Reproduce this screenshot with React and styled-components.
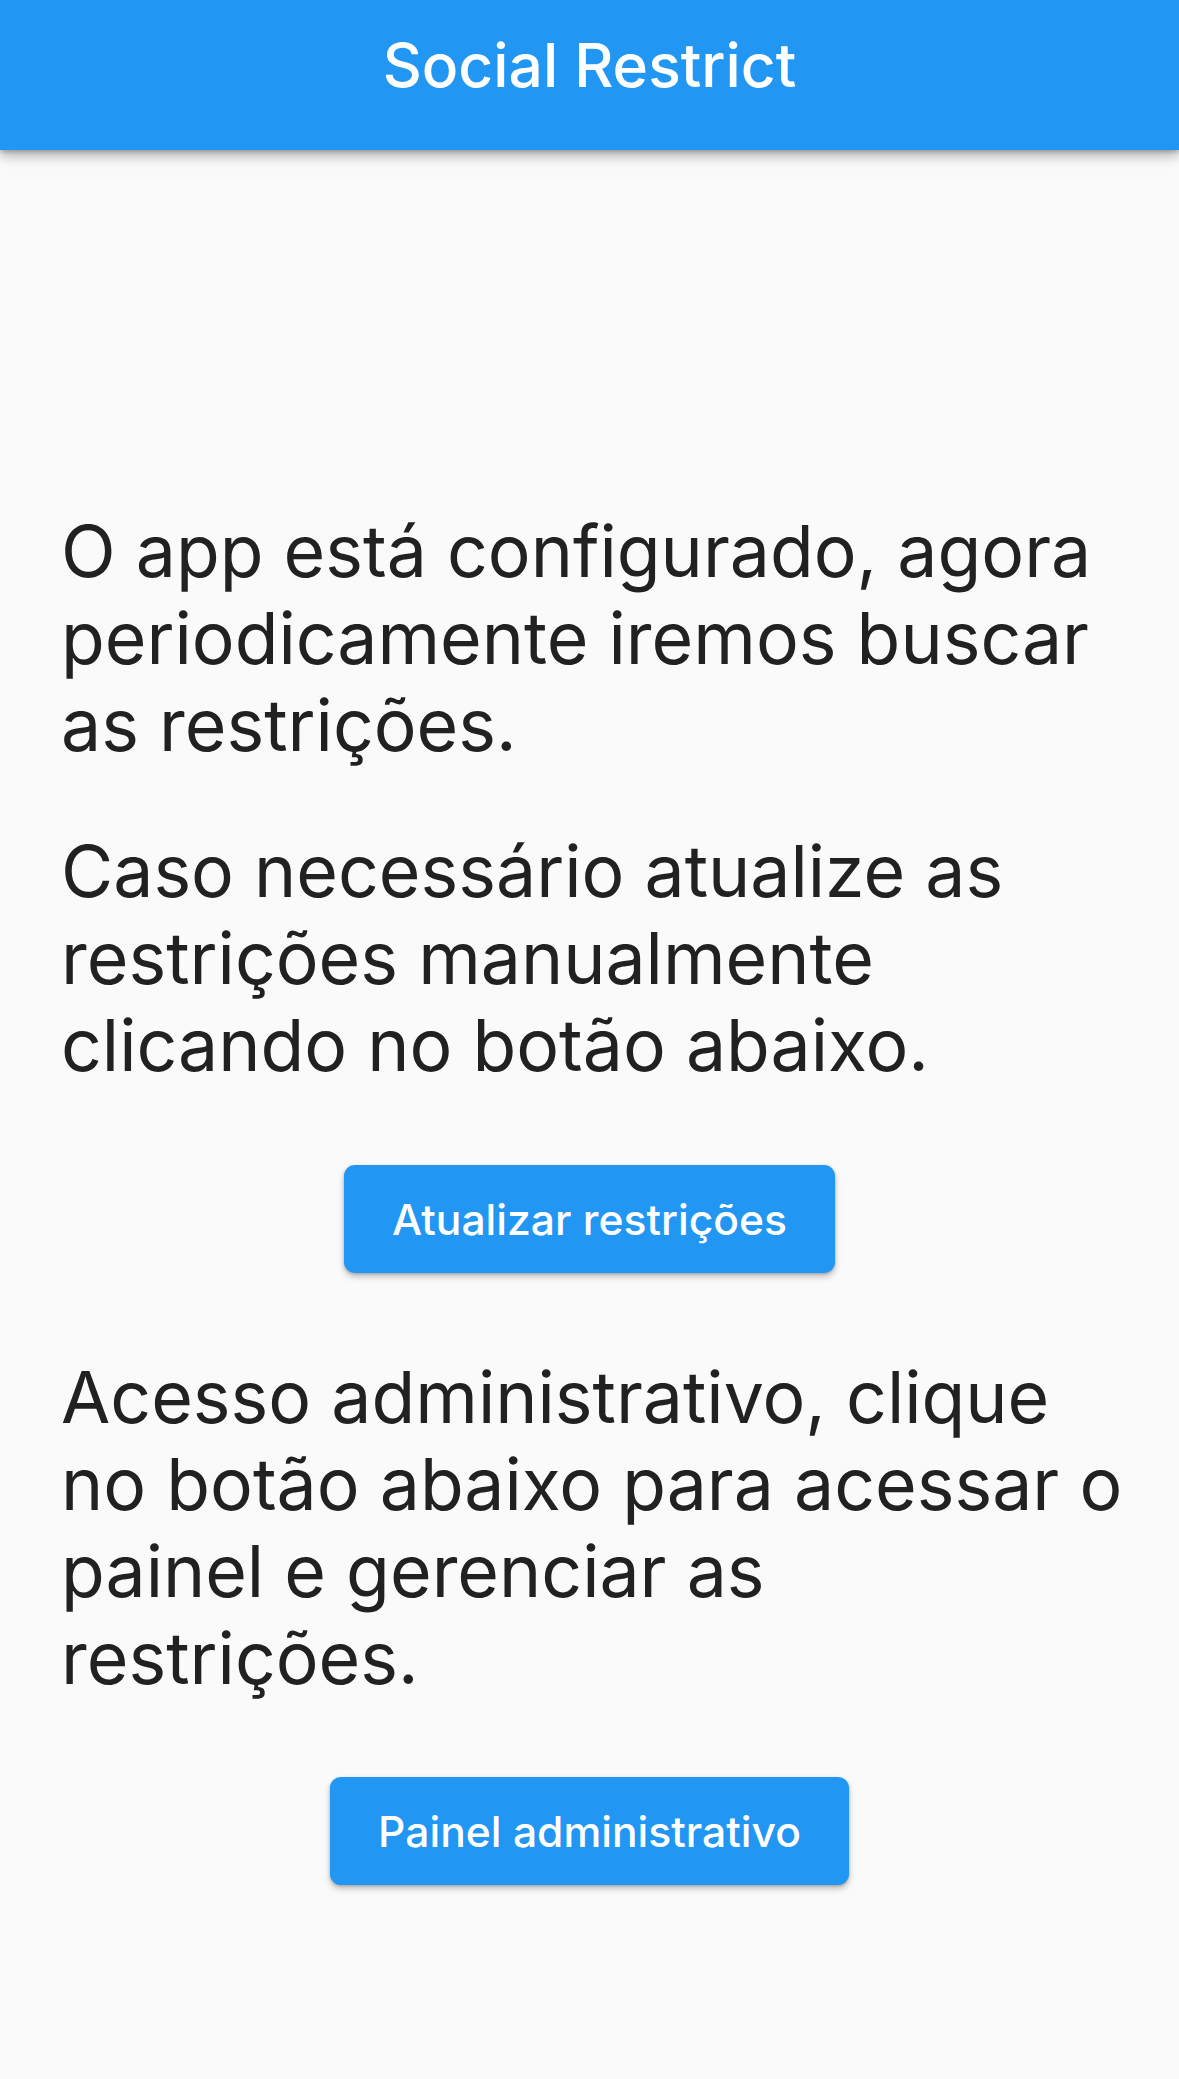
import React from "react";
import styled, { createGlobalStyle } from "styled-components";

const Global = createGlobalStyle`
  html, body { margin: 0; padding: 0; background: #fafafa; }
  body { font-family: Inter, Roboto, sans-serif; }
`;

const Screen = styled.div`
  width: 1179px;
  min-height: 2079px;
  background: #fafafa;
  display: flex;
  flex-direction: column;
`;

const AppBar = styled.header`
  height: 150px;
  background: #2196f3;
  display: flex;
  align-items: center;
  justify-content: center;
  box-shadow: 0 6px 12px rgba(0, 0, 0, 0.28), 0 2px 4px rgba(0, 0, 0, 0.2);
  position: relative;
  z-index: 1;
`;

const Title = styled.h1`
  margin: 0;
  color: #fff;
  font-family: Inter, Roboto, sans-serif;
  font-weight: 500;
  font-size: 60.5px;
  padding-bottom: 20px;
`;

const Body = styled.main`
  display: flex;
  flex-direction: column;
  padding: 358px 40px 0 61px;
`;

const Paragraph = styled.p`
  margin: 0 0 ${(p) => p.$gap}px;
  color: #212121;
  font-family: Inter, Roboto, sans-serif;
  font-size: 71.5px;
  line-height: 87px;
  font-weight: 400;
`;

const ButtonRow = styled.div`
  display: flex;
  justify-content: center;
  margin-bottom: ${(p) => p.$gap}px;
  padding-right: 21px;
`;

const Button = styled.button`
  height: 108px;
  padding: 0 ${(p) => p.$pad}px;
  border: none;
  border-radius: 11px;
  background: #2196f3;
  color: #fff;
  font-family: Inter, Roboto, sans-serif;
  font-weight: 500;
  font-size: 42.6px;
  box-shadow: 0 4px 6px rgba(0, 0, 0, 0.22), 0 1px 3px rgba(0, 0, 0, 0.2);
  cursor: pointer;
`;

export default function App() {
  return (
    <Screen>
      <Global />
      <AppBar>
        <Title>Social Restrict</Title>
      </AppBar>
      <Body>
        <Paragraph $gap={59}>
          O app está configurado, agora periodicamente iremos buscar as restrições.
        </Paragraph>
        <Paragraph $gap={76}>
          Caso necessário atualize as restrições manualmente clicando no botão abaixo.
        </Paragraph>
        <ButtonRow $gap={81}>
          <Button $pad={48}>Atualizar restrições</Button>
        </ButtonRow>
        <Paragraph $gap={75}>
          Acesso administrativo, clique no botão abaixo para acessar o painel e gerenciar as restrições.
        </Paragraph>
        <ButtonRow $gap={0}>
          <Button $pad={48}>Painel administrativo</Button>
        </ButtonRow>
      </Body>
    </Screen>
  );
}
